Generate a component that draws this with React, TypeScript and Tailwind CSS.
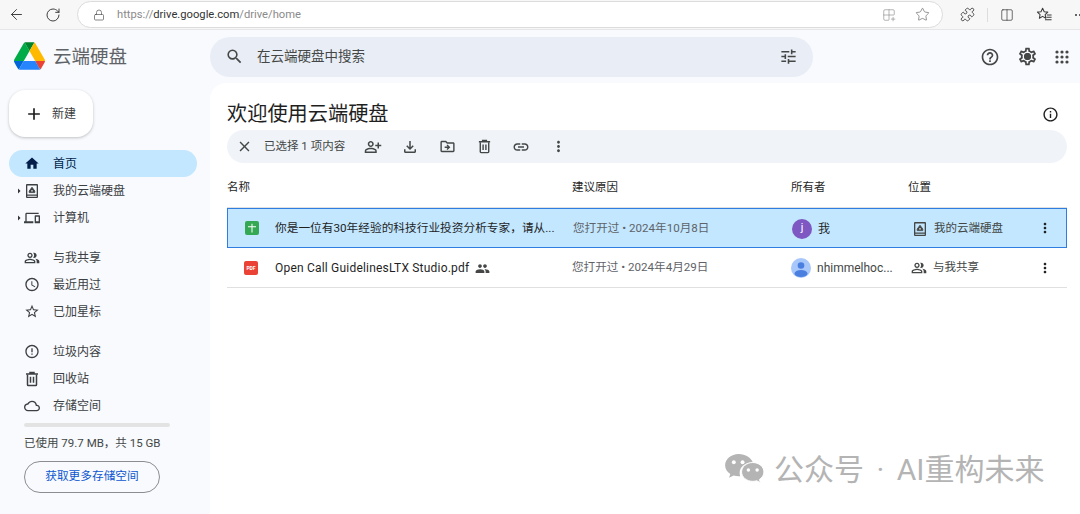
import type { ReactNode } from 'react';
import { ArrowLeft, RotateCw, Lock, Star, Puzzle, Columns2, Grid2x2Plus } from 'lucide-react';
import {
  MdAdd,
  MdArrowRight,
  MdClose,
  MdErrorOutline,
  MdHome,
  MdLink,
  MdMoreVert,
  MdOutlineAccessTime,
  MdOutlineCloud,
  MdOutlineDevices,
  MdOutlineDriveFileMove,
  MdOutlineFileDownload,
  MdOutlineHelpOutline,
  MdOutlineInfo,
  MdOutlinePeopleAlt,
  MdOutlinePersonAddAlt,
  MdOutlineSettings,
  MdOutlineTune,
  MdPeople,
  MdSearch,
  MdStarOutline,
} from 'react-icons/md';

// ── Drawn icons ───────────────────────────────────────────────────────────────

function DriveLogo() {
  return (
    <svg viewBox="0 0 87.3 78" className="w-[31px] h-[28px] shrink-0 mt-[-1px]">
      <path d="m6.6 66.85 3.85 6.65c.8 1.4 1.95 2.5 3.3 3.3l13.75-23.8h-27.5c0 1.55.4 3.1 1.2 4.5z" fill="#0066da" />
      <path d="m43.65 25-13.75-23.8c-1.35.8-2.5 1.9-3.3 3.3l-25.4 44a9.06 9.06 0 0 0 -1.2 4.5h27.5z" fill="#00ac47" />
      <path d="m73.55 76.8c1.35-.8 2.5-1.9 3.3-3.3l1.6-2.75 7.65-13.25c.8-1.4 1.2-2.95 1.2-4.5h-27.502l5.852 11.5z" fill="#ea4335" />
      <path d="m43.65 25 13.75-23.8c-1.35-.8-2.9-1.2-4.5-1.2h-18.5c-1.6 0-3.15.45-4.5 1.2z" fill="#00832d" />
      <path d="m59.8 53h-32.3l-13.75 23.8c1.35.8 2.9 1.2 4.5 1.2h50.8c1.6 0 3.15-.45 4.5-1.2z" fill="#2684fc" />
      <path d="m73.4 26.5-12.7-22c-.8-1.4-1.95-2.5-3.3-3.3l-13.75 23.8 16.15 28h27.45c0-1.55-.4-3.1-1.2-4.5z" fill="#ffba00" />
    </svg>
  );
}

function MyDriveIcon({ className = '' }: { className?: string }) {
  return (
    <svg viewBox="0 0 16 16" className={`w-4 h-4 shrink-0 ${className}`}>
      <path
        fillRule="evenodd"
        fill="currentColor"
        d="M3 1h10a1 1 0 0 1 1 1v12a1 1 0 0 1-1 1H3a1 1 0 0 1-1-1V2a1 1 0 0 1 1-1zm.3 1.4v9.2h9.4V2.4zm0 10.4v.9h9.4v-.9z"
      />
      <path fill="currentColor" stroke="currentColor" strokeWidth="0.8" strokeLinejoin="round" d="M8 4.2 10.800 8v1.600H5.200V8z" />
      <circle cx="8" cy="7.800" r="0.900" fill="#fff" fillOpacity="0.8" />
    </svg>
  );
}

function TrashIcon({ size = 16 }: { size?: number }) {
  return (
    <svg viewBox="0 0 16 16" width={size} height={size} fill="none" stroke="currentColor" strokeWidth="1.500">
      <path d="M2 3h12M6 3V1.600h4V3" />
      <path d="M3.500 3.500v10.200a.8.8 0 0 0 .8.800h7.400a.8.8 0 0 0 .8-.8V3.500" />
      <path d="M6.500 5.800v6M9.500 5.800v6" />
    </svg>
  );
}

function AppsIcon() {
  const dots = [2, 7, 12];
  return (
    <svg viewBox="0 0 14 14" className="w-[14px] h-[14px]" fill="currentColor">
      {dots.map((y) => dots.map((x) => <circle key={`${x}-${y}`} cx={x} cy={y} r="1.600" />))}
    </svg>
  );
}

function FavoritesIcon() {
  return (
    <svg viewBox="0 0 18 18" className="w-[17px] h-[17px]" fill="none" stroke="#3a3a3a" strokeWidth="1.1">
      <path d="M7 2.4 8.7 6l3.8.5-2.8 2.6.7 3.8L7 11l-3.4 1.9.7-3.8L1.5 6.5 5.3 6z" strokeLinejoin="round" />
      <path d="M11.5 9.5h5M11 12h5.5M9.5 14.5h7" />
    </svg>
  );
}

function WeChatLogo() {
  return (
    <svg viewBox="0 0 42 34" className="w-[41px] h-[33px] shrink-0">
      <path fill="#b4b4b4" d="M15 1C7.3 1 1 6.2 1 12.6c0 3.7 2.1 6.9 5.4 9l-1.3 4 4.7-2.4c1.7.5 3.4.8 5.2.8l1.6-.1c-.4-1.1-.6-2.3-.6-3.5 0-5.9 5.6-10.6 12.7-10.6h.9C28 5 22 1 15 1z" />
      <path fill="#b4b4b4" d="M41 19.5C41 14 35.700 9.800 29.500 9.800S18 14 18 19.500s5.300 9.700 11.500 9.700c1.400 0 2.800-.2 4.100-.6l3.800 2-1-3.300c2.800-1.800 4.600-4.600 4.600-7.800z" stroke="#fff" strokeWidth="1" />
      <circle cx="10" cy="9.500" r="2" fill="#fff" />
      <circle cx="19" cy="9.500" r="2" fill="#fff" />
      <circle cx="25" cy="17.500" r="1.800" fill="#fff" />
      <circle cx="34" cy="17.500" r="1.800" fill="#fff" />
    </svg>
  );
}

function SheetsIcon() {
  return (
    <div className="w-[14px] h-[14px] rounded-[2px] bg-[#34a853] flex items-center justify-center shrink-0">
      <svg viewBox="0 0 14 14" className="w-[14px] h-[14px]">
        <path d="M3 5.200h3.500V2.800h1v2.400H11v1H7.500V11.500h-1V6.200H3z" fill="#fff" />
      </svg>
    </div>
  );
}

function PdfIcon() {
  return (
    <div className="w-[14px] h-[14px] rounded-[2px] bg-[#ea4335] flex items-center justify-center shrink-0 text-white text-[5px] font-bold leading-none">
      PDF
    </div>
  );
}

function PersonAvatar() {
  return (
    <svg viewBox="0 0 20 20" className="w-5 h-5 shrink-0">
      <circle cx="10" cy="10" r="10" fill="#a8c7fa" />
      <circle cx="10" cy="7.500" r="3.300" fill="#4a7fe0" />
      <ellipse cx="10" cy="15.500" rx="6.500" ry="3.600" fill="#4a7fe0" />
    </svg>
  );
}

// ── Barre du navigateur ───────────────────────────────────────────────────────

function BrowserBar() {
  return (
    <div className="h-[30px] shrink-0 flex items-center bg-[#f7f7f7] border-b border-[#e6e6e6]">
      <ArrowLeft size={17} strokeWidth={1.3} className="ml-2 mt-[-1px] text-[#333] shrink-0" />
      <RotateCw size={16} strokeWidth={1.4} className="ml-[20px] text-[#333] shrink-0" />
      <div className="ml-4 w-[866px] h-[27px] shrink-0 bg-white border border-[#dcdcdc] rounded-full flex items-center">
        <Lock size={12} strokeWidth={1.4} className="ml-[15px] text-[#555]" />
        <div className="ml-[12px] pt-[1px] text-[11.200px] text-[#8a8a8a]">
          https://<span className="text-[#333]">drive.google.com</span>/drive/home
        </div>
        <Grid2x2Plus size={14} strokeWidth={1.1} className="ml-auto text-[#8a8a8a]" />
        <Star size={15} strokeWidth={1.1} className="ml-[19px] mr-[12px] text-[#666]" />
      </div>
      <Puzzle size={15} strokeWidth={1.4} className="ml-[17px] text-[#333] shrink-0" />
      <div className="ml-[12px] w-px h-[14px] bg-[#ddd] shrink-0" />
      <Columns2 size={14} strokeWidth={1.2} className="ml-[12px] text-[#333] shrink-0" />
      <div className="ml-[22px] shrink-0">
        <FavoritesIcon />
      </div>
      <div className="ml-[22px] flex gap-[2px] shrink-0">
        <div className="w-[2px] h-[2px] rounded-full bg-[#333]" />
        <div className="w-[2px] h-[2px] rounded-full bg-[#333]" />
      </div>
    </div>
  );
}

// ── Sidebar ───────────────────────────────────────────────────────────────────

function NavItem({ icon, label, active, arrow }: { icon: ReactNode; label: string; active?: boolean; arrow?: boolean }) {
  return (
    <div className={`relative h-[27px] flex items-center pl-[15px] rounded-full text-[12px] text-[#3c4043] ${active ? 'bg-[#c2e7ff] text-[#041e49]' : ''}`}>
      {arrow && <MdArrowRight size={12} className="absolute left-[4px] text-[#333]" />}
      <div className="w-4 h-4 flex items-center justify-center text-[#3c4043]">{icon}</div>
      <span className="ml-[13px]">{label}</span>
    </div>
  );
}

function Sidebar() {
  return (
    <div className="w-[210px] shrink-0 flex flex-col pl-[9px] pr-[13px]">
      <div className="flex items-center h-[53px] pl-[5px] gap-[8px]">
        <DriveLogo />
        <span className="text-[18.5px] pt-[2px] text-[#5f6368]">云端硬盘</span>
      </div>
      <div className="mt-[7px] w-[84px] h-[47px] shrink-0 bg-white rounded-2xl flex items-center pl-[15px] shadow-[0_1px_3px_0_rgba(60,64,67,0.3)]">
        <MdAdd size={20} className="text-[#1f1f1f]" />
        <span className="ml-[8px] text-[12px] text-[#3c4043]">新建</span>
      </div>
      <div className="mt-[13px]">
        <NavItem active icon={<MdHome size={19} className="text-[#041e49]" />} label="首页" />
        <NavItem arrow icon={<MyDriveIcon />} label="我的云端硬盘" />
        <NavItem arrow icon={<MdOutlineDevices size={18} />} label="计算机" />
      </div>
      <div className="mt-[13px]">
        <NavItem icon={<MdOutlinePeopleAlt size={18} />} label="与我共享" />
        <NavItem icon={<MdOutlineAccessTime size={17} />} label="最近用过" />
        <NavItem icon={<MdStarOutline size={17} />} label="已加星标" />
      </div>
      <div className="mt-[13px]">
        <NavItem icon={<MdErrorOutline size={17} />} label="垃圾内容" />
        <NavItem icon={<TrashIcon />} label="回收站" />
        <NavItem icon={<MdOutlineCloud size={18} />} label="存储空间" />
      </div>
      <div className="ml-[15px]">
        <div className="mt-[4px] w-[146px] h-[4px] rounded-full bg-[#e3e3e3]" />
        <div className="mt-[8px] text-[11.500px] leading-[16px] text-[#444746]">已使用 79.7 MB，共 15 GB</div>
        <div className="mt-[10px] w-[136px] h-[32px] border border-[#8a8d91] rounded-full flex items-center justify-center text-[11.700px] text-[#0b57d0]">
          获取更多存储空间
        </div>
      </div>
    </div>
  );
}

// ── Liste des fichiers ────────────────────────────────────────────────────────

const COLS = 'grid grid-cols-[345px_219px_117px_1fr] items-center';

function ToolbarIcon({ children }: { children: ReactNode }) {
  return <div className="w-[18px] h-[18px] flex items-center justify-center text-[#444746]">{children}</div>;
}

function FileRow({
  selected,
  icon,
  name,
  shared,
  reason,
  avatar,
  owner,
  locIcon,
  loc,
}: {
  selected?: boolean;
  icon: ReactNode;
  name: string;
  shared?: boolean;
  reason: string;
  avatar: ReactNode;
  owner: string;
  locIcon: ReactNode;
  loc: string;
}) {
  return (
    <div className={`${COLS} relative h-[40px] pt-[1px] text-[12px] ${selected ? 'bg-[#c2e7ff] border border-[#2f7de1]' : 'border-b border-[#e0e0e0]'}`}>
      <div className="flex items-center pl-[17px]">
        {icon}
        <span className={`whitespace-nowrap text-[#1f1f1f] ${selected ? 'ml-[16px] text-[11.700px]' : 'ml-[17px] tracking-[0.2px]'}`}>{name}</span>
        {shared && <MdPeople size={15} className="ml-[6px] text-[#444746]" />}
      </div>
      <div className="text-[11.600px] text-[#5f6368] whitespace-nowrap">{reason}</div>
      <div className="flex items-center gap-[6px]">
        {avatar}
        <span className={`whitespace-nowrap ${selected ? 'text-[#1f1f1f]' : 'text-[#444746]'}`}>{owner}</span>
      </div>
      <div className="flex items-center text-[11.500px] text-[#444746]">
        <div className="w-4 ml-[3px] flex justify-center">{locIcon}</div>
        <span className="ml-[6px]">{loc}</span>
      </div>
      <MdMoreVert size={16} className={`absolute text-[#1f1f1f] ${selected ? 'right-[13px]' : 'right-[14px]'}`} />
    </div>
  );
}

function MainPanel() {
  return (
    <div className="flex-1 bg-white rounded-tl-2xl pl-[17px] pr-[13px] pt-[18px]">
      <div className="flex items-center justify-between h-[26px]">
        <h1 className="text-[20.200px] leading-none text-[#1f1f1f]">欢迎使用云端硬盘</h1>
        <MdOutlineInfo size={17} className="mr-[8px] text-[#1f1f1f]" />
      </div>
      <div className="mt-[3px] h-[33px] rounded-full bg-[#f0f4f9] flex items-center pl-[8px]">
        <ToolbarIcon><MdClose size={17} /></ToolbarIcon>
        <span className="ml-[11px] text-[11.500px] text-[#444746] whitespace-nowrap">已选择 1 项内容</span>
        <div className="ml-[19px] flex items-center gap-[19px]">
          <ToolbarIcon><MdOutlinePersonAddAlt size={18} /></ToolbarIcon>
          <ToolbarIcon><MdOutlineFileDownload size={18} /></ToolbarIcon>
          <ToolbarIcon><MdOutlineDriveFileMove size={17} /></ToolbarIcon>
          <ToolbarIcon><TrashIcon size={15} /></ToolbarIcon>
          <ToolbarIcon><MdLink size={18} /></ToolbarIcon>
          <ToolbarIcon><MdMoreVert size={17} /></ToolbarIcon>
        </div>
      </div>
      <div className={`${COLS} h-[45px] pt-[5px] text-[11.500px] text-[#1f1f1f] border-b border-[#e0e0e0]`}>
        <div>名称</div>
        <div>建议原因</div>
        <div>所有者</div>
        <div>位置</div>
      </div>
      <FileRow
        selected
        icon={<SheetsIcon />}
        name="你是一位有30年经验的科技行业投资分析专家，请从..."
        reason="您打开过 • 2024年10月8日"
        avatar={<div className="w-5 h-5 rounded-full bg-[#7e57c2] text-white text-[11px] flex items-center justify-center">j</div>}
        owner="我"
        locIcon={<MyDriveIcon className="text-[#444746]" />}
        loc="我的云端硬盘"
      />
      <FileRow
        icon={<PdfIcon />}
        name="Open Call GuidelinesLTX Studio.pdf"
        shared
        reason="您打开过 • 2024年4月29日"
        avatar={<PersonAvatar />}
        owner="nhimmelhoc..."
        locIcon={<MdOutlinePeopleAlt size={16} />}
        loc="与我共享"
      />
    </div>
  );
}

export default function App() {
  return (
    <div className="relative w-[1080px] h-[514px] overflow-hidden flex flex-col bg-[#f8fafd] font-['Roboto','Noto_Sans_CJK_SC',sans-serif]">
      <BrowserBar />
      <div className="flex-1 flex min-h-0">
        <Sidebar />
        <div className="flex-1 flex flex-col">
          <div className="h-[53px] shrink-0 flex items-center">
            <div className="w-[603px] h-[40px] rounded-full bg-[#e9eef6] flex items-center pl-[15px] pr-[15px]">
              <MdSearch size={19} className="text-[#444746]" />
              <span className="ml-[13px] text-[13.500px] text-[#444746]">在云端硬盘中搜索</span>
              <MdOutlineTune size={19} className="ml-auto text-[#444746]" />
            </div>
            <div className="ml-auto mr-[11px] flex items-center text-[#444746]">
              <MdOutlineHelpOutline size={20} />
              <div className="relative ml-[17px] flex items-center justify-center">
                <MdOutlineSettings size={21} />
                <div className="absolute w-[7px] h-[7px] rounded-full bg-[#444746]" />
              </div>
              <div className="ml-[17px]">
                <AppsIcon />
              </div>
            </div>
          </div>
          <MainPanel />
        </div>
      </div>
      <div className="absolute left-[724px] top-[453px] flex items-center gap-[9px] text-[30px] leading-none text-[#b4b4b4] whitespace-nowrap [word-spacing:5px]">
        <WeChatLogo />
        <span>公众号 · AI重构未来</span>
      </div>
    </div>
  );
}
